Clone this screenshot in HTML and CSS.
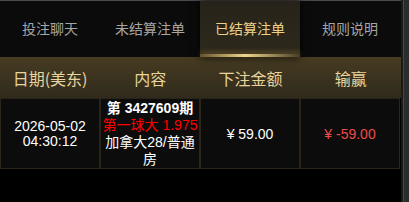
FILE: index.html
```html
<!DOCTYPE html>
<html lang="zh">
<head>
  <meta charset="UTF-8">
  <title>已结算注单</title>
  <link rel="stylesheet" href="styles.css">
</head>
<body>
  <div class="page">
    <div class="app">
      <nav class="tabs">
        <a href="#" class="tab">投注聊天</a>
        <a href="#" class="tab">未结算注单</a>
        <a href="#" class="tab active">已结算注单</a>
        <a href="#" class="tab">规则说明</a>
      </nav>
      <div class="table-head">
        <div>日期(美东)</div>
        <div>内容</div>
        <div>下注金额</div>
        <div>输赢</div>
      </div>
      <div class="table-row">
        <div class="cell date">
          <div>2026-05-02</div>
          <div>04:30:12</div>
        </div>
        <div class="cell content">
          <div class="issue">第 3427609期</div>
          <div class="pick">第一球大 1.975</div>
          <div>加拿大28/普通房</div>
        </div>
        <div class="cell">¥ 59.00</div>
        <div class="cell loss">¥ -59.00</div>
      </div>
    </div>
    <div class="scrollbar"></div>
  </div>
</body>
</html>
```

FILE: styles.css
```css
body, html {
  margin: 0;
  padding: 0;
  height: 100%;
  background: #000;
  font-family: "Liberation Sans", Arial, "Noto Sans CJK SC", sans-serif;
}
.page {
  display: flex;
  height: 100%;
}
.app {
  flex: 1;
  border-top: 1px solid #4a4a4a;
}
.scrollbar {
  width: 6px;
  background: #2c2c2c;
  border-left: 2px solid #1a1a1a;
  box-shadow: inset 1px 0 #474747;
}
.tabs {
  display: grid;
  grid-template-columns: repeat(4, 100px);
  height: 56px;
  background: #0b0b0b;
}
.tab {
  display: flex;
  justify-content: center;
  align-items: center;
  font-family: "Noto Sans CJK SC", sans-serif;
  font-size: 14px;
  color: #a6a6a6;
  text-decoration: none;
  padding-bottom: 2px;
}
.tab.active {
  position: relative;
  color: #ebd08a;
  background: linear-gradient(#27231a, #2e291c);
  box-shadow: 0 0 8px rgba(0, 0, 0, 0.9);
}
.tab.active::after {
  content: "";
  position: absolute;
  left: 0;
  right: 0;
  bottom: 0;
  height: 3px;
  background: linear-gradient(90deg, rgba(214, 178, 90, 0.3), #f0d68c 45%, rgba(214, 178, 90, 0.15));
  box-shadow: 0 -2px 5px rgba(200, 160, 70, 0.35);
}
.table-head {
  display: grid;
  grid-template-columns: repeat(4, 1fr);
  height: 41px;
  align-items: center;
  text-align: center;
  background: linear-gradient(#473c22, #2f2a1c);
  font-family: "Noto Sans CJK SC", sans-serif;
  font-size: 16px;
  color: #e8d49c;
}
.table-row {
  display: grid;
  grid-template-columns: repeat(4, 1fr);
  gap: 2px;
  padding: 1px;
  background: #2a2518;
  margin-right: 1px;
}
.cell {
  display: flex;
  flex-direction: column;
  justify-content: center;
  align-items: center;
  text-align: center;
  background: #0c0c0c;
  color: #fff;
  font-size: 14px;
  height: 69px;
}
.date {
  line-height: 15px;
}
.content {
  line-height: 17px;
}
.issue {
  font-weight: bold;
}
.pick {
  color: #f00;
  white-space: nowrap;
}
.loss {
  color: #f04a4a;
}
```
